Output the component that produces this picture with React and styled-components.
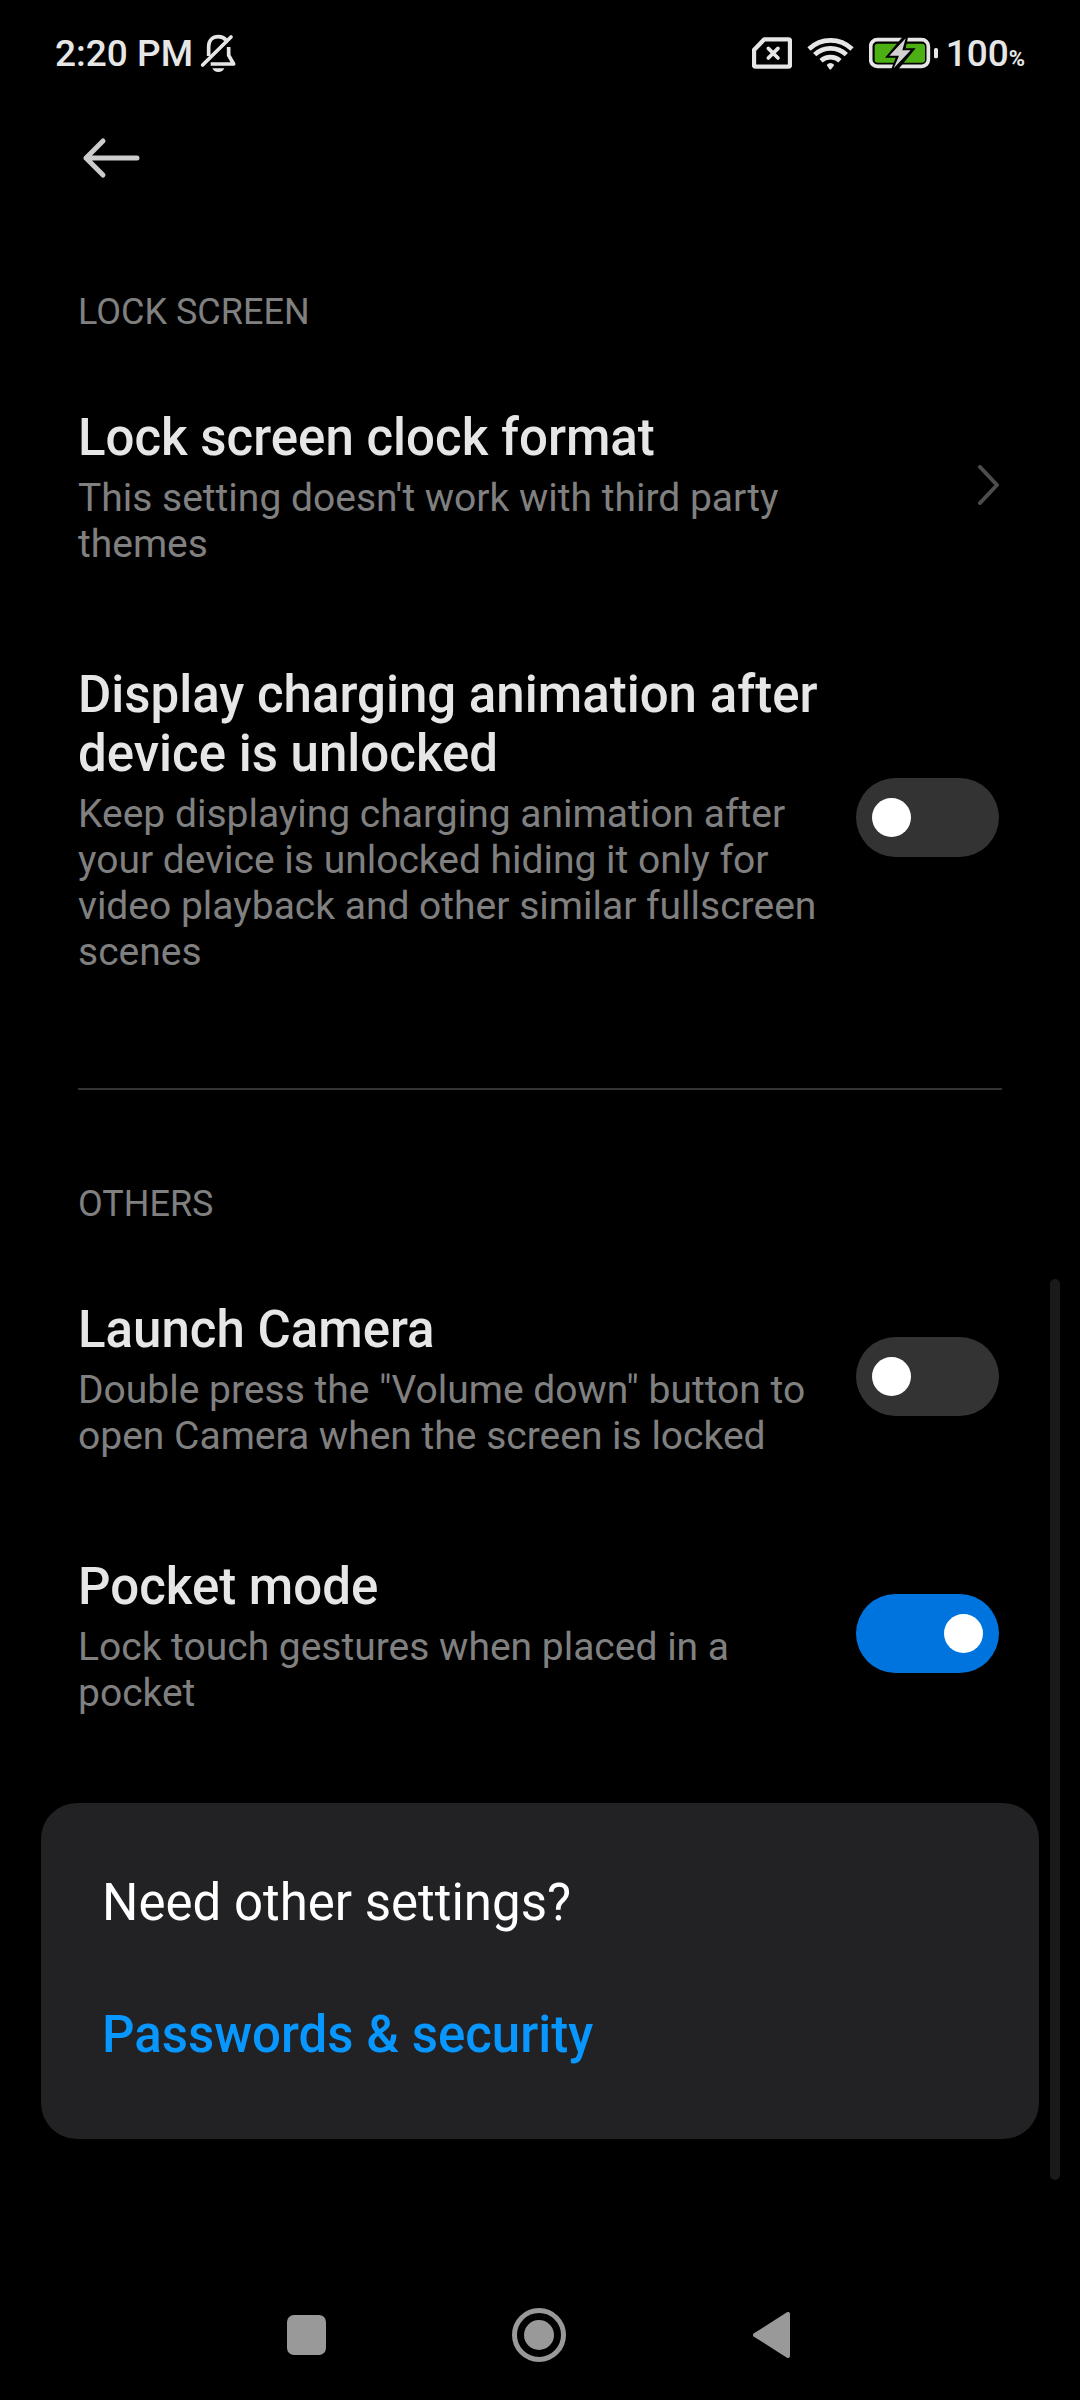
import React from "react";
import styled, { createGlobalStyle } from "styled-components";

const GlobalStyle = createGlobalStyle`
  *, *::before, *::after { box-sizing: border-box; }
  body { margin: 0; background: #000; }
  button { font: inherit; color: inherit; background: none; border: 0; padding: 0; text-align: left; }
  h1, h2, p { margin: 0; font-weight: 400; }
`;

const Screen = styled.div`
  min-height: 100vh;
  display: flex;
  flex-direction: column;
  position: relative;
  background: #000;
  color: #e6e6e6;
  font-family: Roboto, "Noto Sans", sans-serif;
`;

const StatusBar = styled.header`
  display: flex;
  align-items: center;
  justify-content: space-between;
  height: 106px;
  padding: 0 55px;
  font-size: 37px;
  font-weight: 500;
  line-height: 44px;
`;

const StatusGroup = styled.div`
  display: flex;
  align-items: center;
  gap: ${(p) => p.$gap}px;
`;

const StatusText = styled.span`
  display: flex;
  align-items: baseline;
  padding-top: 2px;
`;

const Percent = styled.span`
  font-size: 22px;
  font-weight: 700;
  line-height: 22px;
`;

const Toolbar = styled.div`
  display: flex;
  align-items: center;
  height: 104px;
  padding: 0 80px;
`;

const IconButton = styled.button`
  display: flex;
  align-items: center;
  justify-content: center;
`;

const Section = styled.section`
  margin: 0 78px;
  padding-top: ${(p) => (p.$divided ? 93 : 81)}px;
  border-top: ${(p) => (p.$divided ? "2px solid #333" : "0")};
  padding-bottom: ${(p) => (p.$spaced ? 67 : 0)}px;
`;

const SectionTitle = styled.h2`
  margin-bottom: 23px;
  font-size: 36px;
  line-height: 42px;
  color: #808080;
`;

const Row = styled.div`
  display: grid;
  grid-template-columns: 1fr 143px;
  align-items: center;
  gap: 28px;
  width: 100%;
  padding-right: 3px;
`;

const RowText = styled.span`
  display: flex;
  flex-direction: column;
  gap: 8px;
  padding: 52px 0 46px;
`;

const RowTitle = styled.span`
  font-size: 51px;
  font-weight: 500;
  line-height: 59px;
`;

const RowHint = styled.span`
  font-size: 39px;
  line-height: 46px;
  color: #808080;
`;

const RowEnd = styled.span`
  display: flex;
  justify-content: flex-end;
`;

const Switch = styled.input`
  appearance: none;
  display: flex;
  align-items: center;
  justify-content: ${(p) => (p.checked ? "flex-end" : "flex-start")};
  width: 143px;
  height: 79px;
  margin: 0;
  padding: 0 16px;
  border-radius: 40px;
  background: ${(p) => (p.checked ? "#0074de" : "#333")};

  &::before {
    content: "";
    width: 39px;
    height: 39px;
    border-radius: 50%;
    background: #fff;
  }
`;

const Card = styled.aside`
  display: flex;
  flex-direction: column;
  align-items: flex-start;
  gap: 73px;
  margin: 41px 41px 0;
  padding: 70px 61px 75px;
  border-radius: 36px;
  background: #222224;
  color: #fff;
  font-size: 51px;
  line-height: 59px;
`;

const CardLink = styled.a`
  color: #0896ff;
  font-weight: 500;
  text-decoration: none;
`;

const ScrollThumb = styled.div`
  position: absolute;
  right: 20px;
  bottom: 220px;
  width: 10px;
  height: 901px;
  border-radius: 5px;
  background: #1a1a1a;
`;

const NavBar = styled.nav`
  display: flex;
  justify-content: center;
  height: 130px;
  margin-top: auto;
`;

const NavButton = styled(IconButton)`
  width: 233px;
`;

const MutedBell = () => (
  <svg width="37" height="39" viewBox="480 40 111 117" fill="none" stroke="#e6e6e6" strokeWidth="11" aria-hidden="true">
    <path d="M506 106V78C506 59 518 48 535 48C545 48 553 52 558 58" />
    <path d="M566 79V104L581 130H512" strokeLinejoin="round" />
    <path d="M488 133L573 49" strokeLinecap="round" />
    <path d="M517 143H553C550 150 544 154 535 154S520 150 517 143Z" fill="#e6e6e6" stroke="none" />
  </svg>
);

const SimMissing = () => (
  <svg width="40" height="32" viewBox="42 52 120 96" fill="none" stroke="#e6e6e6" aria-hidden="true">
    <path d="M79 59H151Q156 59 156 64V136Q156 141 151 141H53Q48 141 48 136V91Z" strokeWidth="13" strokeLinejoin="round" />
    <path d="M91 86L120 115M120 86L91 115" strokeWidth="11" strokeLinecap="round" />
  </svg>
);

const Wifi = () => (
  <svg width="47" height="34" viewBox="205 46 141 102" fill="none" stroke="#e6e6e6" strokeWidth="14" aria-hidden="true">
    <path d="M211 85A93 93 0 0 1 340 85" />
    <path d="M228 102A69 69 0 0 1 323 102" />
    <path d="M247 120A43 43 0 0 1 304 120" />
    <path d="M264 133Q275 121 287 133L278 145Q275 148 272 145Z" fill="#e6e6e6" stroke="none" />
  </svg>
);

const Battery = () => (
  <svg width="69" height="32" viewBox="390 48 207 96" aria-hidden="true">
    <rect x="395" y="56" width="173" height="80" rx="20" fill="none" stroke="#e6e6e6" strokeWidth="11" />
    <rect x="407" y="68" width="151" height="57" rx="9" fill="#4cb014" />
    <path d="M494 44L438 110H470L454 152H472L530 82H500L508 44Z" fill="#000" />
    <path d="M500 52L451 104H480L464 142L515 88H490Z" fill="#d2d2d2" />
    <rect x="585" y="81" width="12" height="31" rx="5" fill="#e6e6e6" />
  </svg>
);

const BackArrow = () => (
  <svg width="62" height="44" viewBox="0 0 62 44" fill="none" stroke="#ccc" strokeLinecap="round" strokeLinejoin="round" strokeWidth="5" aria-hidden="true">
    <path d="M57 22H6M23 5L6 22L23 39" />
  </svg>
);

const Chevron = () => (
  <svg width="22" height="40" viewBox="0 0 22 40" fill="none" stroke="#4d4d4d" strokeLinecap="round" strokeLinejoin="round" strokeWidth="4" aria-hidden="true">
    <path d="M3 2L20 20L3 38" />
  </svg>
);

function SwitchRow({ title, hint, initial = false }) {
  const [on, setOn] = React.useState(initial);
  return (
    <Row as="label">
      <RowText>
        <RowTitle>{title}</RowTitle>
        <RowHint>{hint}</RowHint>
      </RowText>
      <Switch type="checkbox" role="switch" checked={on} onChange={() => setOn(!on)} />
    </Row>
  );
}

export default function App() {
  return (
    <Screen>
      <GlobalStyle />
      <StatusBar>
        <StatusGroup $gap={7}>
          <StatusText>2:20 PM</StatusText>
          <MutedBell />
        </StatusGroup>
        <StatusGroup $gap={15}>
          <SimMissing />
          <Wifi />
          <StatusGroup $gap={8}>
            <Battery />
            <StatusText>100<Percent>%</Percent></StatusText>
          </StatusGroup>
        </StatusGroup>
      </StatusBar>
      <Toolbar>
        <IconButton type="button" aria-label="Back"><BackArrow /></IconButton>
      </Toolbar>
      <main>
        <Section $spaced>
          <SectionTitle>LOCK SCREEN</SectionTitle>
          <Row as="button" type="button">
            <RowText>
              <RowTitle>Lock screen clock format</RowTitle>
              <RowHint>This setting doesn't work with third party themes</RowHint>
            </RowText>
            <RowEnd><Chevron /></RowEnd>
          </Row>
          <SwitchRow
            title="Display charging animation after device is unlocked"
            hint="Keep displaying charging animation after your device is unlocked hiding it only for video playback and other similar fullscreen scenes"
          />
        </Section>
        <Section $divided>
          <SectionTitle>OTHERS</SectionTitle>
          <SwitchRow
            title="Launch Camera"
            hint={'Double press the "Volume down" button to open Camera when the screen is locked'}
          />
          <SwitchRow title="Pocket mode" hint="Lock touch gestures when placed in a pocket" initial />
        </Section>
        <Card>
          <p>Need other settings?</p>
          <CardLink href="#passwords">Passwords &amp; security</CardLink>
        </Card>
      </main>
      <ScrollThumb />
      <NavBar aria-label="System">
        <NavButton type="button" aria-label="Recent apps">
          <svg width="40" height="40" viewBox="0 0 40 40" fill="#999" aria-hidden="true">
            <rect width="39" height="40" rx="7" />
          </svg>
        </NavButton>
        <NavButton type="button" aria-label="Home">
          <svg width="56" height="54" viewBox="0 0 56 54" aria-hidden="true">
            <circle cx="27" cy="27" r="24.5" fill="none" stroke="#999" strokeWidth="5" />
            <circle cx="27" cy="27" r="15" fill="#999" />
          </svg>
        </NavButton>
        <NavButton type="button" aria-label="Back">
          <svg width="40" height="46" viewBox="0 0 40 46" fill="#999" stroke="#999" strokeWidth="4" strokeLinejoin="round" aria-hidden="true">
            <path d="M2 23L35 2V44Z" />
          </svg>
        </NavButton>
      </NavBar>
    </Screen>
  );
}
